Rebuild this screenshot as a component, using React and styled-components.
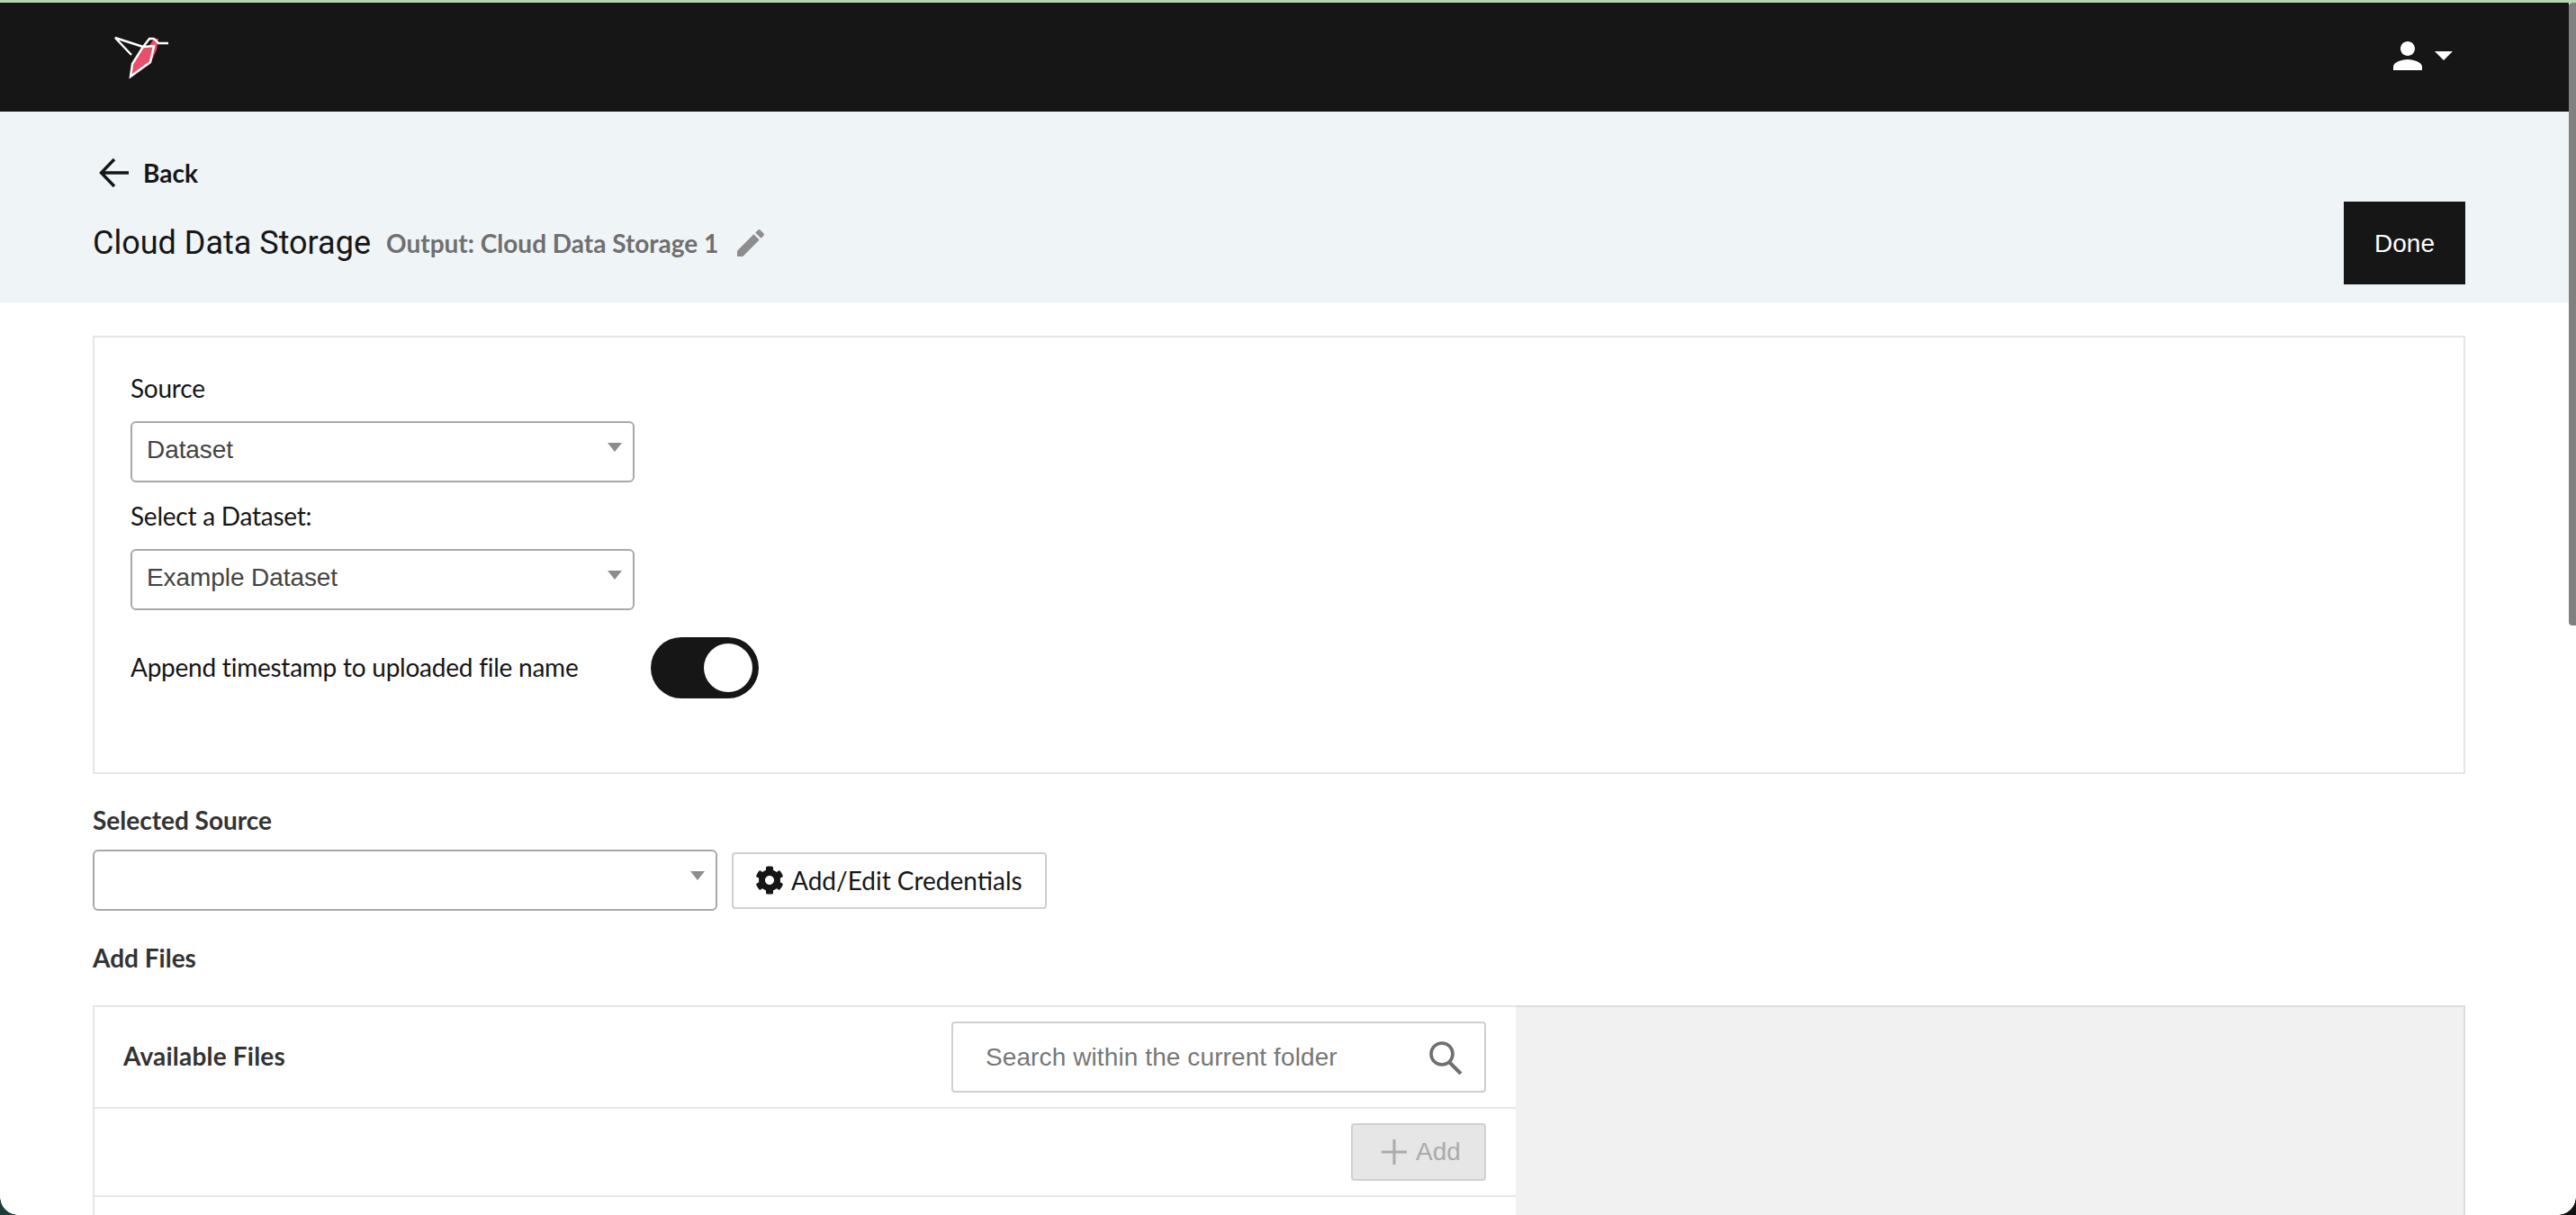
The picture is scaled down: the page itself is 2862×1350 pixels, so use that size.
import styled, { createGlobalStyle } from 'styled-components';
import { MdPerson, MdEdit } from 'react-icons/md';
import { FaCog } from 'react-icons/fa';

const GlobalStyle = createGlobalStyle`
html, body {
  margin: 0;
  height: 1350px;
  overflow: hidden;
  background: #fff;
}
* { box-sizing: border-box; }
`;

const Page = styled.div`
position: relative;
display: flex;
height: 1350px;
border-top: 3px solid #b9d3b5;
font-family: Lato, sans-serif;
color: #161616;
overflow: hidden;
`;

const Main = styled.div`
flex: 1;
min-width: 0;
`;

const Scrollbar = styled.div`
width: 8px;
background: #fff;
`;

const Thumb = styled.div`
height: 692px;
background: #808080;
border-radius: 4px 0 0 4px;
`;

const Corner = styled.div`
position: absolute;
bottom: 0;
width: 20px;
height: 20px;
${p => p.$side}: 0;
background: radial-gradient(circle at ${p => p.$side === 'left' ? '100% 0' : '0 0'}, transparent 19.5px, ${p => p.$color} 20px);
`;

const Navbar = styled.header`
height: 121px;
background: #161616;
display: flex;
align-items: center;
justify-content: space-between;
padding: 0 129px 0 127px;
`;

const UserMenu = styled.div`
display: flex;
align-items: center;
gap: 6px;
color: #fff;
margin-top: -3px;
`;

const Caret = styled.span`
width: 0;
height: 0;
border-left: 10px solid transparent;
border-right: 10px solid transparent;
border-top: 10px solid #fff;
`;

const TitleBand = styled.section`
height: 212px;
background: #eff4f7;
padding: 0 115px 20px 103px;
display: flex;
flex-direction: column;
`;

const BackLink = styled.a`
display: flex;
align-items: center;
gap: 15px;
margin: 52px 0 0 7px;
height: 32px;
font-size: 28px;
font-weight: 700;
color: #161616;
`;

const TitleRow = styled.div`
display: flex;
align-items: center;
justify-content: space-between;
margin-top: 16px;
`;

const TitleGroup = styled.div`
display: flex;
align-items: center;
`;

const Title = styled.h1`
margin: 0;
font-family: Roboto, sans-serif;
font-size: 36px;
font-weight: 400;
`;

const OutputName = styled.span`
margin-left: 17px;
font-size: 28px;
font-weight: 700;
color: #6f6f6f;
`;

const EditButton = styled.span`
display: flex;
margin-left: 16px;
color: #8d8d8d;
`;

const DoneButton = styled.button`
width: 135px;
height: 92px;
padding: 2px 0 0;
border: none;
background: #161616;
color: #fff;
font-family: "Liberation Sans", sans-serif;
font-size: 28px;
`;

const Content = styled.main`
padding: 37px 115px 0 103px;
`;

const SourceCard = styled.section`
height: 487px;
border: 2px solid #e6e6e6;
padding: 38px 40px 0;
`;

const FieldLabel = styled.label`
display: block;
margin-top: ${p => p.$top || 0}px;
font-size: 28px;
line-height: 36px;
letter-spacing: -0.24px;
color: #161616;
`;

const SelectBox = styled.div`
position: relative;
width: ${p => p.$width}px;
height: 68px;
display: flex;
align-items: center;
padding: 0 0 5px 16px;
margin-top: ${p => p.$top || 0}px;
border: 2px solid #a8a8a8;
border-radius: 6px;
font-family: "Liberation Sans", sans-serif;
font-size: 28px;
letter-spacing: -0.08px;
color: #444;
background: #fff;
`;

const SelectArrow = styled.span`
position: absolute;
right: 12px;
top: 22px;
border-left: 8px solid transparent;
border-right: 8px solid transparent;
border-top: 10px solid #8c8c8c;
`;

const ToggleRow = styled.div`
display: flex;
align-items: center;
justify-content: space-between;
width: 698px;
margin-top: 30px;
`;

const ToggleLabel = styled(FieldLabel)`
padding-bottom: 2px;
`;

const Toggle = styled.span`
display: flex;
align-items: center;
justify-content: flex-end;
width: 120px;
height: 68px;
padding-right: 7px;
border-radius: 34px;
background: #161616;
&::after {
  content: '';
  width: 54px;
  height: 54px;
  border-radius: 50%;
  background: #fff;
}
`;

const SectionLabel = styled.h2`
margin: 0;
font-size: 28px;
line-height: 36px;
font-weight: 700;
color: #333;
`;

const SourcesBlock = styled.div`
padding-top: 33px;
`;

const CredentialRow = styled.div`
display: flex;
align-items: center;
gap: 16px;
margin-top: 15px;
`;

const CredentialsButton = styled.button`
display: flex;
align-items: center;
gap: 8px;
width: 350px;
height: 63px;
padding: 0 0 0 24px;
border: 2px solid #d0d0d0;
border-radius: 4px;
background: #fff;
font-family: Lato, sans-serif;
font-size: 28px;
color: #161616;
`;

const AddFilesHeading = styled(SectionLabel)`
margin-top: 34px;
`;

const FilesPanel = styled.section`
display: flex;
margin-top: 35px;
height: 240px;
`;

const AvailableFiles = styled.div`
width: 1581px;
border: 2px solid #e6e6e6;
border-bottom: none;
border-right: none;
`;

const FilesHeader = styled.div`
height: 113px;
display: flex;
align-items: center;
justify-content: space-between;
padding: 0 33px 0 32px;
border-bottom: 2px solid #e6e6e6;
`;

const FilesTitle = styled(SectionLabel)`
padding-bottom: 3px;
letter-spacing: 0.2px;
`;

const SearchField = styled.div`
display: flex;
align-items: center;
justify-content: space-between;
width: 594px;
height: 79px;
padding: 0 24px 0 36px;
border: 2px solid #d0d0d0;
border-radius: 4px;
font-family: "Liberation Sans", sans-serif;
font-size: 28px;
letter-spacing: 0.1px;
color: #777;
`;

const ActionRow = styled.div`
height: 98px;
display: flex;
align-items: center;
justify-content: flex-end;
padding-right: 33px;
border-bottom: 2px solid #e6e6e6;
`;

const AddButton = styled.button`
display: flex;
align-items: center;
justify-content: center;
gap: 10px;
width: 150px;
height: 64px;
padding: 0 0 0 6px;
border: 2px solid #d0d0d0;
border-radius: 4px;
background: #e6e6e6;
font-family: "Liberation Sans", sans-serif;
font-size: 28px;
color: #aaa;
`;

const PreviewPane = styled.div`
flex: 1;
background: #f1f1f1;
border-top: 2px solid #ddd;
border-right: 2px solid #ddd;
`;

function HummingbirdLogo() {
  return (
    <svg width="62" height="48" viewBox="128 40 62 48" fill="none">
      <path d="M160 52 L166 52 L172 43 L177 43 L175 55 L168 71 L146 85 L148 71 Z" fill="#e8506a" />
      <path d="M147 61 L129 42 L160 52 L148 71 L146 85 L168 69 L172 51 L160 52 L167 43 L172 43 L177 48 L188 48" stroke="#fff" strokeWidth="2.4" strokeLinejoin="miter" />
    </svg>
  );
}

function BackArrow() {
  return (
    <svg width="34" height="34" viewBox="0 0 34 34" fill="none" stroke="#161616" strokeWidth="3.4">
      <path d="M33 17 H3 M17 2 L2.5 17 L17 32" />
    </svg>
  );
}

function SearchIcon() {
  return (
    <svg width="38" height="38" viewBox="0 0 38 38" fill="none" stroke="#6f6f6f">
      <circle cx="15" cy="15" r="12" strokeWidth="3.6" />
      <path d="M23 24 L36 37" strokeWidth="4" />
    </svg>
  );
}

function PlusIcon() {
  return (
    <svg width="28" height="28" viewBox="0 0 28 28" stroke="#aaa" strokeWidth="3">
      <path d="M14 0 V28 M0 14 H28" />
    </svg>
  );
}

export default function App() {
  return (
    <>
      <GlobalStyle />
      <Page>
        <Main>
          <Navbar>
            <HummingbirdLogo />
            <UserMenu>
              <MdPerson size={48} />
              <Caret />
            </UserMenu>
          </Navbar>
          <TitleBand>
            <BackLink><BackArrow />Back</BackLink>
            <TitleRow>
              <TitleGroup>
                <Title>Cloud Data Storage</Title>
                <OutputName>Output: Cloud Data Storage 1</OutputName>
                <EditButton><MdEdit size={40} /></EditButton>
              </TitleGroup>
              <DoneButton>Done</DoneButton>
            </TitleRow>
          </TitleBand>
          <Content>
            <SourceCard>
              <FieldLabel>Source</FieldLabel>
              <SelectBox $width={560} $top={19}>Dataset<SelectArrow /></SelectBox>
              <FieldLabel $top={19}>Select a Dataset:</FieldLabel>
              <SelectBox $width={560} $top={19}>Example Dataset<SelectArrow /></SelectBox>
              <ToggleRow>
                <ToggleLabel>Append timestamp to uploaded file name</ToggleLabel>
                <Toggle />
              </ToggleRow>
            </SourceCard>
            <SourcesBlock>
              <SectionLabel>Selected Source</SectionLabel>
              <CredentialRow>
                <SelectBox $width={694}><SelectArrow /></SelectBox>
                <CredentialsButton><FaCog size={32} />Add/Edit Credentials</CredentialsButton>
              </CredentialRow>
              <AddFilesHeading>Add Files</AddFilesHeading>
              <FilesPanel>
                <AvailableFiles>
                  <FilesHeader>
                    <FilesTitle>Available Files</FilesTitle>
                    <SearchField>Search within the current folder<SearchIcon /></SearchField>
                  </FilesHeader>
                  <ActionRow>
                    <AddButton><PlusIcon />Add</AddButton>
                  </ActionRow>
                </AvailableFiles>
                <PreviewPane />
              </FilesPanel>
            </SourcesBlock>
          </Content>
        </Main>
        <Scrollbar><Thumb /></Scrollbar>
        <Corner $side="left" $color="#1c3d3a" />
        <Corner $side="right" $color="#111" />
      </Page>
    </>
  );
}
